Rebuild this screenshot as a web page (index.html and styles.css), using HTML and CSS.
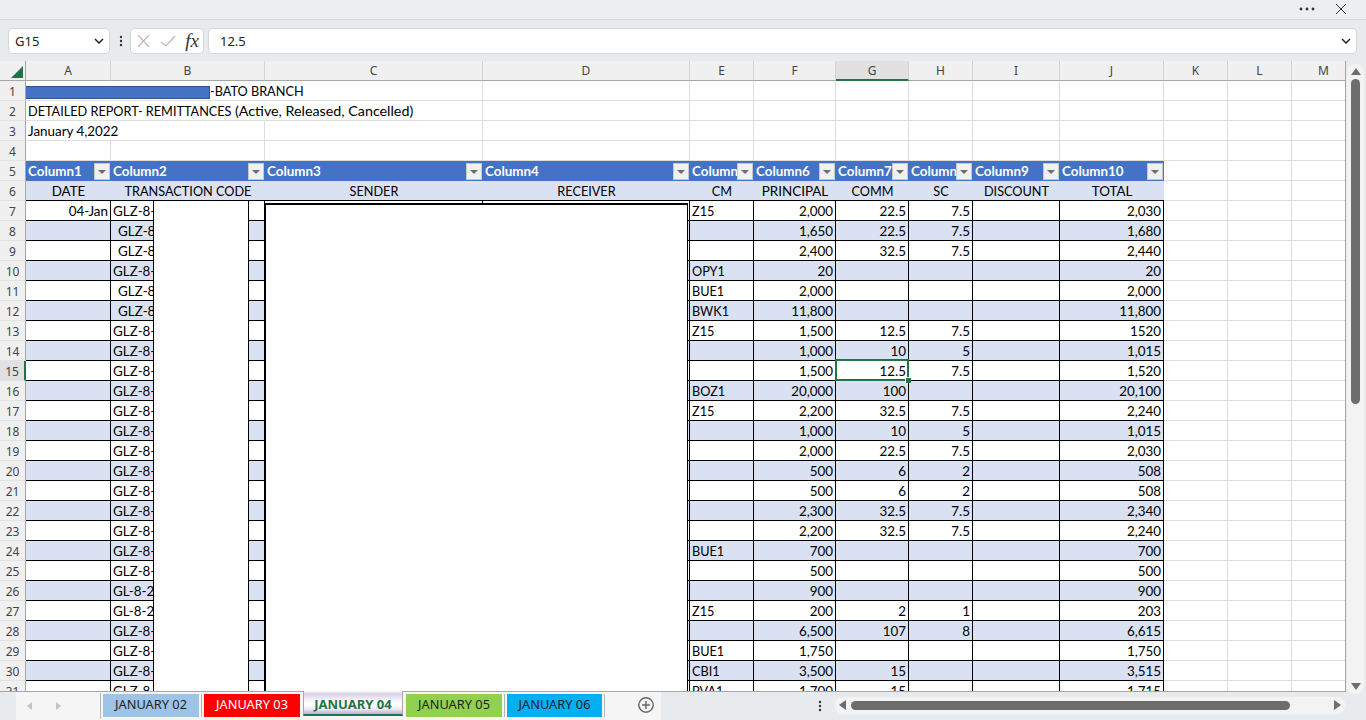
FILE: index.html
```html
<!DOCTYPE html>
<html lang="en">
<head>
<meta charset="utf-8">
<title>Detailed report</title>
<link rel="stylesheet" href="styles.css">
</head>
<body>
<div class="titlebar">
  <svg class="more" width="18" height="4" viewBox="0 0 18 4"><circle cx="2" cy="2" r="1.4"/><circle cx="8" cy="2" r="1.4"/><circle cx="14" cy="2" r="1.4"/></svg>
  <svg class="close" width="12" height="12" viewBox="0 0 12 12"><path d="M1 1l10 10M11 1L1 11"/></svg>
</div>
<div class="formulabar">
  <div class="namebox"><span>G15</span><svg class="chev" width="10" height="6" viewBox="0 0 10 6"><path d="M1 1l4 4 4-4"/></svg></div>
  <svg class="vdots" width="4" height="12" viewBox="0 0 4 12"><circle cx="2" cy="2" r="1.2"/><circle cx="2" cy="6" r="1.2"/><circle cx="2" cy="10" r="1.2"/></svg>
  <div class="fxbox">
    <svg class="fxicon" width="13" height="12" viewBox="0 0 13 12"><path d="M1 0l11 12M12 0L1 12"/></svg>
    <svg class="fxicon" width="16" height="12" viewBox="0 0 16 12"><path d="M1 7l5 4L15 1"/></svg>
    <span class="fx">fx</span>
  </div>
  <div class="input"><span>12.5</span><svg class="chev" width="10" height="6" viewBox="0 0 10 6"><path d="M1 1l4 4 4-4"/></svg></div>
</div>
<div class="sheet">
  <div class="grid">
    <table>
      <colgroup>
        <col class="c0"><col class="ca"><col class="cb"><col class="cc"><col class="cd"><col class="ce"><col class="cf"><col class="cg"><col class="ch"><col class="ci"><col class="cj"><col class="ck"><col class="cl"><col class="cm">
      </colgroup>
      <tr class="cols">
        <th class="corner"><svg width="14" height="14" viewBox="0 0 14 14"><polygon points="13,1 13,13 1,13"/></svg></th>
        <th>A</th><th>B</th><th>C</th><th>D</th><th>E</th><th>F</th><th class="sel">G</th><th>H</th><th>I</th><th>J</th><th>K</th><th>L</th><th>M</th>
      </tr>
      <tr><th>1</th><td colspan="3"><span class="redact"></span><span class="caps">-BATO BRANCH</span></td><td></td><td></td><td></td><td></td><td></td><td></td><td></td><td></td><td></td><td></td></tr>
      <tr><th>2</th><td colspan="3"><span class="caps">DETAILED REPORT- REMITTANCES</span> <span class="lower">(Active, Released, Cancelled)</span></td><td></td><td></td><td></td><td></td><td></td><td></td><td></td><td></td><td></td><td></td></tr>
      <tr><th>3</th><td colspan="2">January 4,2022</td><td></td><td></td><td></td><td></td><td></td><td></td><td></td><td></td><td></td><td></td><td></td></tr>
      <tr><th>4</th><td></td><td></td><td></td><td></td><td></td><td></td><td></td><td></td><td></td><td></td><td></td><td></td><td></td></tr>
      <tr class="tblhead"><th>5</th>
        <td class="h"><div class="hc"><span>Column1</span><i class="filter"></i></div></td>
        <td class="h"><div class="hc"><span>Column2</span><i class="filter"></i></div></td>
        <td class="h"><div class="hc"><span>Column3</span><i class="filter"></i></div></td>
        <td class="h"><div class="hc"><span>Column4</span><i class="filter"></i></div></td>
        <td class="h"><div class="hc"><span>Column5</span><i class="filter"></i></div></td>
        <td class="h"><div class="hc"><span>Column6</span><i class="filter"></i></div></td>
        <td class="h"><div class="hc"><span>Column7</span><i class="filter"></i></div></td>
        <td class="h"><div class="hc"><span>Column8</span><i class="filter"></i></div></td>
        <td class="h"><div class="hc"><span>Column9</span><i class="filter"></i></div></td>
        <td class="h"><div class="hc"><span>Column10</span><i class="filter"></i></div></td>
        <td></td><td></td><td></td></tr>
      <tr class="sub"><th>6</th><td class="t">DATE</td><td class="t tn">TRANSACTION CODE</td><td class="t tn">SENDER</td><td class="t tn">RECEIVER</td><td class="t tn">CM</td><td class="t">PRINCIPAL</td><td class="t tn">COMM</td><td class="t tn">SC</td><td class="t tn">DISCOUNT</td><td class="t">TOTAL</td><td></td><td></td><td></td></tr>
      <tr><th>7</th><td class="d n">04-Jan</td><td class="d">GLZ-8-1</td><td class="d"></td><td class="d"></td><td class="d caps">Z15</td><td class="d n">2,000</td><td class="d n">22.5</td><td class="d n">7.5</td><td class="d n"></td><td class="d n">2,030</td><td></td><td></td><td></td></tr>
      <tr class="b"><th>8</th><td class="d n"></td><td class="d i">GLZ-8-1</td><td class="d"></td><td class="d"></td><td class="d"></td><td class="d n">1,650</td><td class="d n">22.5</td><td class="d n">7.5</td><td class="d n"></td><td class="d n">1,680</td><td></td><td></td><td></td></tr>
      <tr><th>9</th><td class="d n"></td><td class="d i">GLZ-8-1</td><td class="d"></td><td class="d"></td><td class="d"></td><td class="d n">2,400</td><td class="d n">32.5</td><td class="d n">7.5</td><td class="d n"></td><td class="d n">2,440</td><td></td><td></td><td></td></tr>
      <tr class="b"><th>10</th><td class="d n"></td><td class="d">GLZ-8-1</td><td class="d"></td><td class="d"></td><td class="d caps">OPY1</td><td class="d n">20</td><td class="d n"></td><td class="d n"></td><td class="d n"></td><td class="d n">20</td><td></td><td></td><td></td></tr>
      <tr><th>11</th><td class="d n"></td><td class="d i">GLZ-8-1</td><td class="d"></td><td class="d"></td><td class="d caps">BUE1</td><td class="d n">2,000</td><td class="d n"></td><td class="d n"></td><td class="d n"></td><td class="d n">2,000</td><td></td><td></td><td></td></tr>
      <tr class="b"><th>12</th><td class="d n"></td><td class="d i">GLZ-8-1</td><td class="d"></td><td class="d"></td><td class="d caps">BWK1</td><td class="d n">11,800</td><td class="d n"></td><td class="d n"></td><td class="d n"></td><td class="d n">11,800</td><td></td><td></td><td></td></tr>
      <tr><th>13</th><td class="d n"></td><td class="d">GLZ-8-1</td><td class="d"></td><td class="d"></td><td class="d caps">Z15</td><td class="d n">1,500</td><td class="d n">12.5</td><td class="d n">7.5</td><td class="d n"></td><td class="d n">1520</td><td></td><td></td><td></td></tr>
      <tr class="b"><th>14</th><td class="d n"></td><td class="d">GLZ-8-1</td><td class="d"></td><td class="d"></td><td class="d"></td><td class="d n">1,000</td><td class="d n">10</td><td class="d n">5</td><td class="d n"></td><td class="d n">1,015</td><td></td><td></td><td></td></tr>
      <tr><th class="sel">15</th><td class="d n"></td><td class="d">GLZ-8-1</td><td class="d"></td><td class="d"></td><td class="d"></td><td class="d n">1,500</td><td class="d n active">12.5<span class="cursor"><i class="handle"></i></span></td><td class="d n">7.5</td><td class="d n"></td><td class="d n">1,520</td><td></td><td></td><td></td></tr>
      <tr class="b"><th>16</th><td class="d n"></td><td class="d">GLZ-8-1</td><td class="d"></td><td class="d"></td><td class="d caps">BOZ1</td><td class="d n">20,000</td><td class="d n">100</td><td class="d n"></td><td class="d n"></td><td class="d n">20,100</td><td></td><td></td><td></td></tr>
      <tr><th>17</th><td class="d n"></td><td class="d">GLZ-8-1</td><td class="d"></td><td class="d"></td><td class="d caps">Z15</td><td class="d n">2,200</td><td class="d n">32.5</td><td class="d n">7.5</td><td class="d n"></td><td class="d n">2,240</td><td></td><td></td><td></td></tr>
      <tr class="b"><th>18</th><td class="d n"></td><td class="d">GLZ-8-1</td><td class="d"></td><td class="d"></td><td class="d"></td><td class="d n">1,000</td><td class="d n">10</td><td class="d n">5</td><td class="d n"></td><td class="d n">1,015</td><td></td><td></td><td></td></tr>
      <tr><th>19</th><td class="d n"></td><td class="d">GLZ-8-1</td><td class="d"></td><td class="d"></td><td class="d"></td><td class="d n">2,000</td><td class="d n">22.5</td><td class="d n">7.5</td><td class="d n"></td><td class="d n">2,030</td><td></td><td></td><td></td></tr>
      <tr class="b"><th>20</th><td class="d n"></td><td class="d">GLZ-8-1</td><td class="d"></td><td class="d"></td><td class="d"></td><td class="d n">500</td><td class="d n">6</td><td class="d n">2</td><td class="d n"></td><td class="d n">508</td><td></td><td></td><td></td></tr>
      <tr><th>21</th><td class="d n"></td><td class="d">GLZ-8-1</td><td class="d"></td><td class="d"></td><td class="d"></td><td class="d n">500</td><td class="d n">6</td><td class="d n">2</td><td class="d n"></td><td class="d n">508</td><td></td><td></td><td></td></tr>
      <tr class="b"><th>22</th><td class="d n"></td><td class="d">GLZ-8-1</td><td class="d"></td><td class="d"></td><td class="d"></td><td class="d n">2,300</td><td class="d n">32.5</td><td class="d n">7.5</td><td class="d n"></td><td class="d n">2,340</td><td></td><td></td><td></td></tr>
      <tr><th>23</th><td class="d n"></td><td class="d">GLZ-8-1</td><td class="d"></td><td class="d"></td><td class="d"></td><td class="d n">2,200</td><td class="d n">32.5</td><td class="d n">7.5</td><td class="d n"></td><td class="d n">2,240</td><td></td><td></td><td></td></tr>
      <tr class="b"><th>24</th><td class="d n"></td><td class="d">GLZ-8-1</td><td class="d"></td><td class="d"></td><td class="d caps">BUE1</td><td class="d n">700</td><td class="d n"></td><td class="d n"></td><td class="d n"></td><td class="d n">700</td><td></td><td></td><td></td></tr>
      <tr><th>25</th><td class="d n"></td><td class="d">GLZ-8-1</td><td class="d"></td><td class="d"></td><td class="d"></td><td class="d n">500</td><td class="d n"></td><td class="d n"></td><td class="d n"></td><td class="d n">500</td><td></td><td></td><td></td></tr>
      <tr class="b"><th>26</th><td class="d n"></td><td class="d">GL-8-2</td><td class="d"></td><td class="d"></td><td class="d"></td><td class="d n">900</td><td class="d n"></td><td class="d n"></td><td class="d n"></td><td class="d n">900</td><td></td><td></td><td></td></tr>
      <tr><th>27</th><td class="d n"></td><td class="d">GL-8-2</td><td class="d"></td><td class="d"></td><td class="d caps">Z15</td><td class="d n">200</td><td class="d n">2</td><td class="d n">1</td><td class="d n"></td><td class="d n">203</td><td></td><td></td><td></td></tr>
      <tr class="b"><th>28</th><td class="d n"></td><td class="d">GLZ-8-1</td><td class="d"></td><td class="d"></td><td class="d"></td><td class="d n">6,500</td><td class="d n">107</td><td class="d n">8</td><td class="d n"></td><td class="d n">6,615</td><td></td><td></td><td></td></tr>
      <tr><th>29</th><td class="d n"></td><td class="d">GLZ-8-1</td><td class="d"></td><td class="d"></td><td class="d caps">BUE1</td><td class="d n">1,750</td><td class="d n"></td><td class="d n"></td><td class="d n"></td><td class="d n">1,750</td><td></td><td></td><td></td></tr>
      <tr class="b"><th>30</th><td class="d n"></td><td class="d">GLZ-8-1</td><td class="d"></td><td class="d"></td><td class="d caps">CBI1</td><td class="d n">3,500</td><td class="d n">15</td><td class="d n"></td><td class="d n"></td><td class="d n">3,515</td><td></td><td></td><td></td></tr>
      <tr><th>31</th><td class="d n"></td><td class="d">GLZ-8-1</td><td class="d"></td><td class="d"></td><td class="d caps">PVA1</td><td class="d n">1,700</td><td class="d n">15</td><td class="d n"></td><td class="d n"></td><td class="d n">1,715</td><td></td><td></td><td></td></tr>
    </table>
    <div class="mask mask-b"></div>
    <div class="mask mask-c"></div>
  </div>
  <div class="vscroll">
    <svg width="10" height="7" viewBox="0 0 10 7"><polygon points="5,0 10,7 0,7"/></svg>
    <div class="vtrack"><div class="vthumb"></div></div>
    <svg width="10" height="7" viewBox="0 0 10 7"><polygon points="0,0 10,0 5,7"/></svg>
  </div>
</div>
<div class="bottombar">
  <div class="tabstrip">
    <div class="tabnav">
      <svg width="5" height="8" viewBox="0 0 5 8"><polygon points="5,0 5,8 0,4"/></svg>
      <svg width="5" height="8" viewBox="0 0 5 8"><polygon points="0,0 5,4 0,8"/></svg>
    </div>
    <div class="tab t02">JANUARY 02</div>
    <div class="tab t03">JANUARY 03</div>
    <div class="tab on">JANUARY 04</div>
    <div class="tab t05">JANUARY 05</div>
    <div class="tab t06">JANUARY 06</div>
    <svg class="addsheet" width="16" height="16" viewBox="0 0 16 16"><circle cx="8" cy="8" r="7.2"/><path d="M8 4v8M4 8h8"/></svg>
  </div>
  <svg class="bdots" width="4" height="12" viewBox="0 0 4 12"><circle cx="2" cy="2" r="1.2"/><circle cx="2" cy="6" r="1.2"/><circle cx="2" cy="10" r="1.2"/></svg>
  <div class="hscroll">
    <svg width="7" height="10" viewBox="0 0 7 10"><polygon points="7,0 7,10 0,5"/></svg>
    <div class="htrack"><div class="hthumb"></div></div>
    <svg width="7" height="10" viewBox="0 0 7 10"><polygon points="0,0 7,5 0,10"/></svg>
  </div>
</div>
</body>
</html>
```

FILE: styles.css
```css
* { box-sizing: border-box; }
html, body { margin: 0; height: 720px; overflow: hidden; }
body {
  display: flex;
  flex-direction: column;
  background: #e8ebee;
  font-family: "Lato", "Liberation Sans", sans-serif;
  font-size: 13.4px;
  color: #000;
}

.titlebar {
  height: 20px;
  flex: none;
  background: #eceef2;
  border-bottom: 1px solid #d4d7da;
  display: flex;
  align-items: center;
  justify-content: flex-end;
  gap: 18px;
  padding-right: 19px;
}
.more { fill: #333; margin-top: -2px; }
.close { fill: none; stroke: #333; stroke-width: 1; margin-top: -2px; }

.formulabar {
  height: 41px;
  flex: none;
  display: flex;
  align-items: center;
  padding: 0 9px 0 8px;
  background: #e8ebee;
  font-family: "Noto Sans", sans-serif;
  font-size: 13px;
  color: #222;
}
.namebox, .fxbox, .input {
  height: 26px;
  background: #fff;
  border: 1px solid #d6d6d6;
  border-radius: 4px;
  display: flex;
  align-items: center;
}
.namebox { width: 102px; padding: 0 5px 0 6px; justify-content: space-between; }
.chev { fill: none; stroke: #222; stroke-width: 1.5; }
.vdots { fill: #333; margin: 0 7px 0 9px; }
.fxbox { width: 74px; padding: 0 4px 0 6px; justify-content: space-between; }
.fxicon { fill: none; stroke: #b9b9b9; stroke-width: 1.2; }
.fx { font-family: "Liberation Serif", serif; font-style: italic; font-size: 19px; color: #333; line-height: 1; }
.input { flex: 1; margin-left: 4px; padding: 0 5px 0 11px; justify-content: space-between; }

.sheet { height: 631px; flex: none; display: flex; }
.grid {
  position: relative;
  width: 1346px;
  height: 631px;
  overflow: hidden;
  background: #fff;
  border-right: 1px solid #a6a6a6;
  border-bottom: 1px solid #a6a6a6;
}
table {
  border-collapse: separate;
  border-spacing: 0;
  table-layout: fixed;
  width: 1356px;
}
.c0 { width: 26px; } .ca { width: 85px; } .cb { width: 154px; } .cc { width: 218px; }
.cd { width: 207px; } .ce { width: 64px; } .cf { width: 82px; } .cg { width: 73px; }
.ch { width: 64px; } .ci { width: 87px; } .cj { width: 104px; } .ck { width: 64px; }
.cl { width: 64px; } .cm { width: 64px; }

tr { height: 20px; }
th {
  padding: 1px 0 0;
  background: #f0f0f0;
  font-family: "Noto Sans", sans-serif;
  font-weight: 400;
  font-size: 12px;
  color: #444;
  border-right: 1px solid #c8c8c8;
  border-bottom: 1px solid #e2e2e2;
  text-align: center;
  height: 20px;
}
tr th:first-child { border-right-color: #a6a6a6; }
.cols th {
  padding: 0;
  border-right: 1px solid #d4d4d4;
  border-bottom: 1px solid #a6a6a6;
}
.cols th.sel { background: #e1e1e1; border-bottom: 2px solid #217346; }
tr th.sel { background: #e1e1e1; border-right: 2px solid #217346; }
.cols th.sel { border-right: 1px solid #d4d4d4; }
.corner svg { display: block; margin: 3px 0 0 10px; fill: #217346; }
.corner { text-align: left; }

td {
  padding: 1px 2px 0;
  height: 20px;
  white-space: nowrap;
  overflow: hidden;
  border-right: 1px solid #dedede;
  border-bottom: 1px solid #dedede;
  line-height: 18px;
}
.caps, td.caps { font-size: 12.7px; }
.lower { font-size: 14.3px; }
.redact {
  display: inline-block;
  width: 184px;
  height: 13px;
  margin: 0 0 -1px -2px;
  vertical-align: -2px;
  background: #4472c4;
  border: 1px solid #2f528f;
  border-left: 0;
}
td.h {
  background: #4472c4;
  color: #fff;
  font-weight: 700;
  padding: 0 1px 0 2px;
  border-right: 0;
  border-bottom: 0;
}
.hc { display: flex; align-items: center; justify-content: space-between; height: 20px; }
.hc span { flex: 1; min-width: 0; overflow: hidden; }
.filter {
  flex: none;
  width: 16px;
  height: 17px;
  position: relative;
  background: #f0f0f0;
  border: 1px solid #c8c8c8;
}
.filter::after {
  content: "";
  position: absolute;
  left: 3px;
  top: 6px;
  border-left: 4px solid transparent;
  border-right: 4px solid transparent;
  border-top: 4px solid #6d6d6d;
}
td.t {
  background: #d9e1f2;
  text-align: center;
  border-right: 0;
  border-bottom: 1px solid #000;
  overflow: hidden;
}
td.tn { font-size: 12.7px; }
td.d { border-right: 1px solid #000; border-bottom: 1px solid #000; }
tr.b td.d { background: #d9e1f2; }
td.n { text-align: right; }
td.i { padding-left: 7px; }
td.active { position: relative; overflow: visible; }
.cursor {
  position: absolute;
  left: -1px;
  right: -1px;
  top: -2px;
  bottom: -1px;
  border: 2px solid #217346;
}
.handle {
  position: absolute;
  right: -4px;
  bottom: -4px;
  width: 6px;
  height: 6px;
  background: #217346;
  border: 1px solid #fff;
  border-width: 1px 0 0 1px;
}
.mask { position: absolute; background: #fff; }
.mask-b {
  left: 153px;
  top: 140px;
  width: 96px;
  height: 500px;
  border-left: 1px solid #000;
  border-right: 1px solid #000;
}
.mask-c {
  left: 264px;
  top: 142px;
  width: 424px;
  height: 500px;
  border: 1px solid #000;
  border-left-width: 2px;
  border-top-width: 2px;
}

.vscroll {
  position: relative;
  width: 17px;
  height: 630px;
  margin: 3px 0 0 1px;
  background: #f3f3f3;
  border-radius: 8px;
  display: flex;
  flex-direction: column;
  align-items: center;
  padding-top: 4px;
  fill: #6d6d6d;
}
.vtrack { flex: 1; width: 9px; margin: 3px 0; }
.vthumb { width: 9px; height: 325px; margin-top: 1px; background: #6d6d6d; border-radius: 5px; }
.vscroll svg:last-child { margin-bottom: 4px; }

.bottombar {
  height: 28px;
  flex: none;
  display: flex;
  align-items: center;
  background: #e8ebee;
}
.tabstrip {
  width: 645px;
  height: 28px;
  margin-left: 16px;
  background: #f5f5f5;
  display: flex;
  align-items: flex-start;
  font-family: "Noto Sans", sans-serif;
  font-size: 12.8px;
  flex: none;
  position: relative;
}
.tabnav {
  width: 85px;
  height: 26px;
  flex: none;
  display: flex;
  align-items: center;
  gap: 24px;
  padding-left: 11px;
  fill: #c4c4c4;
  border-right: 1px solid #b5b5b5;
  margin-top: 1px;
}
.tab {
  height: 23px;
  margin: 2px 2px 0 2px;
  width: 96px;
  padding-bottom: 3px;
  display: flex;
  align-items: center;
  justify-content: center;
  color: #1f1f1f;
  white-space: nowrap;
}
.t02 { background: #9dc3e6; box-shadow: 2px 0 0 #f5f5f5, 3px 0 0 #b5b5b5; }
.t03 { background: #ff0000; color: #fff; margin-left: 3px; }
.t05 { background: #92d050; box-shadow: 2px 0 0 #f5f5f5, 3px 0 0 #b5b5b5; }
.t06 { background: #00b0f0; margin-left: 3px; width: 95px; box-shadow: 2px 0 0 #f5f5f5, 3px 0 0 #b5b5b5; }
.tab.on {
  width: 100px;
  height: 25px;
  margin: -1px 1px 0 1px;
  padding: 2px 0 0;
  background: linear-gradient(#fbfafd 0, #d9d0e6 3px, #f6f3f9 9px, #fff 13px, #efeaf4 18px, #c8b9d9 22px);
  border: 1px solid #a6a6a6;
  border-top: 0;
  border-bottom: 2px solid #217346;
  color: #217346;
  font-weight: 700;
  font-size: 13px;
}
.addsheet { position: absolute; left: 622px; top: 5px; fill: none; stroke: #666; stroke-width: 1.4; }
.bdots { fill: #333; margin-left: 157px; flex: none; }
.hscroll {
  width: 510px;
  height: 17px;
  margin: -2px 0 0 13px;
  background: #f3f3f3;
  border-radius: 8px;
  display: flex;
  align-items: center;
  padding: 0 4px;
  fill: #6d6d6d;
  flex: none;
}
.htrack { flex: 1; padding: 0 44px 0 5px; }
.hthumb { height: 9px; background: #6d6d6d; border-radius: 5px; }
```
